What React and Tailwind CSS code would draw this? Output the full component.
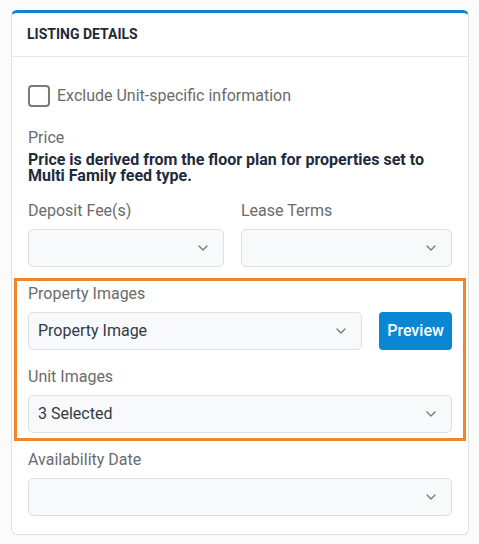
import React from 'react';
import { ChevronDown } from 'lucide-react';

const Label = ({ children, className = '' }) => (
  <div className={`text-[16px] leading-[20px] text-[#6b6b6b] ${className}`}>{children}</div>
);

const Select = ({ value, className = '' }) => (
  <div
    className={`flex h-[38px] items-center justify-between rounded-[5px] border border-[#dbe1e8] bg-[#f7f9fb] pl-[9px] pr-[12px] ${className}`}
  >
    <span className="text-[16px] text-[#333a44]">{value}</span>
    <ChevronDown className="h-[16px] w-[16px] text-[#7a7a7a]" strokeWidth={2} />
  </div>
);

export default function App() {
  return (
    <div
      className="min-h-[544px] bg-[#fbfbfb] pt-[10px] pl-[11px]"
      style={{ fontFamily: 'Roboto, "Liberation Sans", sans-serif' }}
    >
      <div className="w-[458px] rounded-[6px] border border-[#e2e2e2] border-t-[3px] border-t-[#0a86cc] bg-white">
        {/* Header */}
        <div className="flex h-[44px] items-center border-b border-[#e6e6e6] px-[15px]">
          <h3 className="text-[14px] font-bold text-[#1f2a37]">LISTING DETAILS</h3>
        </div>

        <div className="px-[16px] pb-[18px]">
          <label className="mt-[27px] flex items-center gap-[7px]">
            <span className="h-[22px] w-[22px] rounded-[4px] border-2 border-[#7a7a7a] bg-white" />
            <span className="text-[16px] text-[#6b6b6b]">Exclude Unit-specific information</span>
          </label>

          <Label className="mt-[20px]">Price</Label>
          <p className="mt-[4px] text-[16px] font-bold leading-[16px] text-[#1e2b3c]">
            Price is derived from the floor plan for properties set to Multi Family feed type.
          </p>

          <div className="mt-[17px] grid grid-cols-[196px_211px] gap-x-[17px]">
            <div>
              <Label>Deposit Fee(s)</Label>
              <Select className="mt-[8px]" />
            </div>
            <div>
              <Label>Lease Terms</Label>
              <Select className="mt-[8px]" />
            </div>
          </div>

          {/* Highlighted images section */}
          <div className="-mx-[14px] mt-[11px] border-[3px] border-[#f0862a] px-[11px] pt-[3px] pb-[5px]">
            <Label>Property Images</Label>
            <div className="mt-[8px] flex gap-[17px]">
              <Select value="Property Image" className="flex-1" />
              <button className="h-[38px] w-[73px] rounded-[4px] bg-[#0a87d2] text-[16px] font-medium text-white">
                Preview
              </button>
            </div>
            <Label className="mt-[17px]">Unit Images</Label>
            <Select value="3 Selected" className="mt-[8px]" />
          </div>

          <Label className="mt-[9px]">Availability Date</Label>
          <Select className="mt-[8px]" />
        </div>
      </div>
    </div>
  );
}
